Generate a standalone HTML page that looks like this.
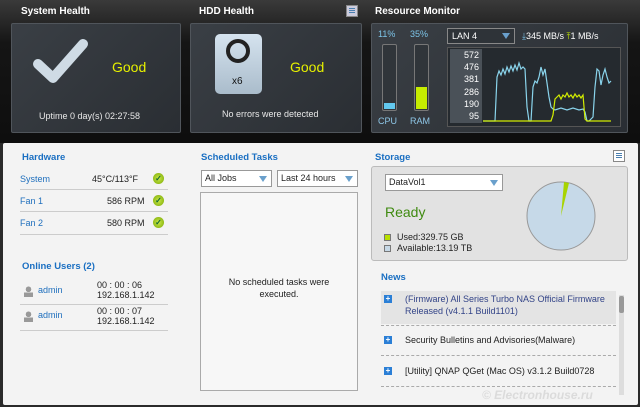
<!DOCTYPE html>
<html><head><meta charset="utf-8"><style>
*{margin:0;padding:0;box-sizing:border-box}
body{width:640px;height:407px;overflow:hidden;background:#2a2a2a;font-family:"Liberation Sans",sans-serif;font-size:9px;position:relative}
.a{position:absolute}
.top{left:0;top:0;width:640px;height:143px;background:linear-gradient(#3a3a3a,#151515 30%,#0e0e0e)}
.h{color:#fff;font-weight:bold;font-size:10px}
.box{background:linear-gradient(135deg,#3a3f45,#2a2e33);border:1px solid #50555b;border-radius:2px}
.good{color:#e6f000;font-size:14px}
.low{left:3px;top:143px;width:635px;height:262px;background:#f3f3f3;border-radius:2px}
.bl{color:#1a6fc2;font-weight:bold;font-size:9.5px}
.lk{color:#1f6fbd;font-size:9px}
.t{color:#222;font-size:9px}
.chk{width:11px;height:11px;border-radius:50%;background:radial-gradient(#c8e84a,#7aa800);color:#163;font-size:8px;line-height:11px;text-align:center;font-weight:bold}
.ln{height:1px;background:#ccc}
.sel{background:#fff;border:1px solid #999;font-size:9px;padding:2px 3px;color:#222}
.tri{position:absolute;right:4px;top:5px;width:0;height:0;border-left:4px solid transparent;border-right:4px solid transparent;border-top:6px solid #6aa0cc}
.dash{border-top:1px dashed #aaa;height:0}
.plus{width:8px;height:8px;background:#2b7fd6;color:#fff;font-size:8px;line-height:8px;text-align:center;font-weight:bold}
.menu{width:12px;height:12px;border:1px solid #888;background:#fff;padding:2px 2px}
.menu i{display:block;height:1px;background:#4a7fb0;margin-bottom:1px}
</style></head><body>
<div class="a top"></div>
<div class="a h" style="left:21px;top:6px">System Health</div>
<div class="a h" style="left:199px;top:6px">HDD Health</div>
<div class="a h" style="left:375px;top:6px">Resource Monitor</div>
<div class="a menu" style="left:346px;top:5px;background:#ccd"><i></i><i></i><i></i></div>
<div class="a box" style="left:11px;top:23px;width:170px;height:110px"></div>
<svg class="a" style="left:33px;top:36px" width="58" height="50"><path d="M5 28 L20 42 L50 8" stroke="#cfdbe5" stroke-width="10" fill="none" stroke-linecap="round" stroke-linejoin="round"/></svg>
<div class="a good" style="left:112px;top:59px">Good</div>
<div class="a" style="left:39px;top:111px;color:#e8e8e8;font-size:9px">Uptime 0 day(s) 02:27:58</div>
<div class="a box" style="left:190px;top:23px;width:172px;height:110px"></div>
<div class="a" style="left:215px;top:34px;width:47px;height:60px;border-radius:5px;background:linear-gradient(#d5e3ef,#aabccb)"></div>
<div class="a" style="left:226px;top:39px;width:24px;height:24px;border:4px solid #222;border-radius:50%"></div>
<div class="a" style="left:232px;top:76px;font-size:10px;color:#111">x6</div>
<div class="a good" style="left:290px;top:59px">Good</div>
<div class="a" style="left:222px;top:109px;color:#e8e8e8;font-size:9px">No errors were detected</div>
<div class="a box" style="left:371px;top:23px;width:257px;height:110px"></div>
<div class="a" style="left:378px;top:29px;color:#7cc4e8;font-size:9px">11%</div>
<div class="a" style="left:410px;top:29px;color:#7cc4e8;font-size:9px">35%</div>
<div class="a" style="left:382px;top:44px;width:15px;height:67px;border:1px solid #777;background:#30353a;border-radius:2px"></div>
<div class="a" style="left:384px;top:103px;width:11px;height:6px;background:#62c8ee"></div>
<div class="a" style="left:414px;top:44px;width:15px;height:67px;border:1px solid #777;background:#30353a;border-radius:2px"></div>
<div class="a" style="left:416px;top:87px;width:11px;height:22px;background:#c6ec00"></div>
<div class="a" style="left:378px;top:116px;color:#8fc8e8;font-size:9px">CPU</div>
<div class="a" style="left:410px;top:116px;color:#8fc8e8;font-size:9px">RAM</div>
<div class="a" style="left:447px;top:28px;width:68px;height:16px;border:1px solid #888;background:#2e3338;color:#fff;font-size:9px;padding:2px 4px">LAN 4<div class="tri" style="top:4px"></div></div>
<div class="a" style="left:522px;top:31px;color:#fff;font-size:9px"><span style="color:#7cc4e8">⤓</span>345 MB/s <span style="color:#c6ec00">⤒</span>1 MB/s</div>
<div class="a" style="left:447px;top:47px;width:174px;height:80px;border:1px solid #555;background:#252a2f"></div>
<div class="a" style="left:450px;top:49px;width:32px;height:74px;background:#4a5158;color:#fff;font-size:9px;line-height:12.2px;text-align:right;padding-right:3px">572<br>476<br>381<br>286<br>190<br>95</div>
<svg class="a" style="left:483px;top:47px" width="137" height="80">
<polyline fill="none" stroke="#8ad4ec" stroke-width="1.2" points="0,74 12,74 14,30 16,24 18,28 20,22 22,27 24,20 26,25 28,19 30,24 32,18 34,23 36,16 38,22 40,20 42,22 44,60 46,74 48,74 50,40 52,34 54,36 56,30 58,20 60,28 62,22 64,36 66,50 68,60 70,62 72,63 78,61 84,63 90,61 96,63 100,62 102,65 104,74 106,74 110,70 112,40 114,22 116,24 118,38 120,28 122,22 124,30 126,36 128,34"/>
<polyline fill="none" stroke="#d2ec00" stroke-width="1.2" points="0,74 68,74 70,68 72,52 74,50 76,48 78,52 80,48 82,50 84,46 86,50 88,48 90,51 92,47 94,50 96,48 98,51 100,48 102,72 104,74 128,74"/>
</svg>
<div class="a low"></div>
<div class="a bl" style="left:22px;top:152px">Hardware</div>
<div class="a lk" style="left:20px;top:174px">System</div><div class="a t" style="left:92px;top:174px">45°C/113°F</div><div class="a chk" style="left:153px;top:173px">✓</div>
<div class="a ln" style="left:20px;top:189px;width:148px"></div>
<div class="a lk" style="left:20px;top:196px">Fan 1</div><div class="a t" style="left:107px;top:196px">586 RPM</div><div class="a chk" style="left:153px;top:195px">✓</div>
<div class="a ln" style="left:20px;top:211px;width:148px"></div>
<div class="a lk" style="left:20px;top:218px">Fan 2</div><div class="a t" style="left:107px;top:218px">580 RPM</div><div class="a chk" style="left:153px;top:217px">✓</div>
<div class="a ln" style="left:20px;top:234px;width:148px"></div>
<div class="a bl" style="left:22px;top:261px">Online Users (2)</div>
<div class="a" style="left:24px;top:286px;width:9px;height:11px;background:radial-gradient(circle at 50% 30%,#999 30%,transparent 32%),linear-gradient(transparent 60%,#999 60%)"></div>
<div class="a lk" style="left:38px;top:285px">admin</div>
<div class="a t" style="left:97px;top:280px;line-height:10px">00 : 00 : 06<br>192.168.1.142</div>
<div class="a ln" style="left:20px;top:304px;width:148px"></div>
<div class="a" style="left:24px;top:311px;width:9px;height:11px;background:radial-gradient(circle at 50% 30%,#999 30%,transparent 32%),linear-gradient(transparent 60%,#999 60%)"></div>
<div class="a lk" style="left:38px;top:310px">admin</div>
<div class="a t" style="left:97px;top:306px;line-height:10px">00 : 00 : 07<br>192.168.1.142</div>
<div class="a ln" style="left:20px;top:330px;width:148px"></div>
<div class="a bl" style="left:201px;top:152px">Scheduled Tasks</div>
<div class="a sel" style="left:201px;top:170px;width:71px;height:17px">All Jobs<div class="tri"></div></div>
<div class="a sel" style="left:277px;top:170px;width:81px;height:17px">Last 24 hours<div class="tri"></div></div>
<div class="a" style="left:200px;top:192px;width:158px;height:199px;border:1px solid #aaa;background:#f7f7f7"></div>
<div class="a t" style="left:200px;top:276px;width:158px;text-align:center;line-height:12px">No scheduled tasks were<br>executed.</div>
<div class="a bl" style="left:375px;top:152px">Storage</div>
<div class="a menu" style="left:613px;top:150px"><i></i><i></i><i></i></div>
<div class="a" style="left:371px;top:166px;width:257px;height:95px;background:#e2e2e2;border:1px solid #bbb;border-radius:3px"></div>
<div class="a sel" style="left:385px;top:174px;width:118px;height:17px">DataVol1<div class="tri"></div></div>
<div class="a" style="left:385px;top:204px;color:#3f8a10;font-size:14px">Ready</div>
<div class="a" style="left:384px;top:234px;width:7px;height:7px;background:#b8e000;border:1px solid #777"></div>
<div class="a t" style="left:397px;top:232px">Used:329.75 GB</div>
<div class="a" style="left:384px;top:245px;width:7px;height:7px;background:#c6d8e6;border:1px solid #777"></div>
<div class="a t" style="left:397px;top:243px">Available:13.19 TB</div>
<svg class="a" style="left:525px;top:180px" width="72" height="72"><circle cx="36" cy="36" r="34" fill="#c6d9e8" stroke="#999" stroke-width="1"/><path d="M36 36 L39 2 L44 3 Z" fill="#a8d400"/></svg>
<div class="a bl" style="left:381px;top:272px">News</div>
<div class="a" style="left:381px;top:291px;width:235px;height:33px;background:#e4e4e4"></div>
<div class="a plus" style="left:384px;top:295px">+</div>
<div class="a" style="left:405px;top:293px;color:#334488;line-height:12px">(Firmware) All Series Turbo NAS Official Firmware<br>Released (v4.1.1 Build1101)</div>
<div class="a dash" style="left:381px;top:325px;width:235px"></div>
<div class="a plus" style="left:384px;top:336px">+</div>
<div class="a t" style="left:405px;top:335px">Security Bulletins and Advisories(Malware)</div>
<div class="a dash" style="left:381px;top:355px;width:235px"></div>
<div class="a plus" style="left:384px;top:367px">+</div>
<div class="a t" style="left:405px;top:366px">[Utility] QNAP QGet (Mac OS) v3.1.2 Build0728</div>
<div class="a dash" style="left:381px;top:386px;width:235px"></div>
<div class="a" style="left:619px;top:295px;width:5px;height:100px;background:#ddd"></div>
<div class="a" style="left:619px;top:296px;width:5px;height:17px;background:#999;border-radius:2px"></div>
<div class="a" style="left:482px;top:388px;color:rgba(190,190,190,.45);font-size:12px;font-style:italic;font-weight:bold">© Electronhouse.ru</div>
</body></html>
